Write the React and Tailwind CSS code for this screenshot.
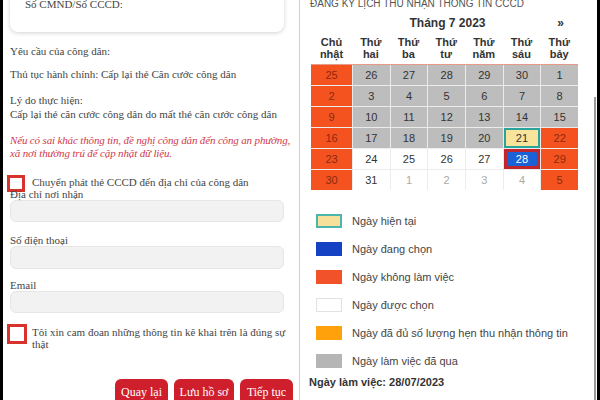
import React from "react";

const rows = [
  [["25","o"],["26","g"],["27","g"],["28","g"],["29","g"],["30","g"],["1","g"]],
  [["2","o"],["3","g"],["4","g"],["5","g"],["6","g"],["7","g"],["8","g"]],
  [["9","o"],["10","g"],["11","g"],["12","g"],["13","g"],["14","g"],["15","g"]],
  [["16","o"],["17","g"],["18","g"],["19","g"],["20","g"],["21","t"],["22","o"]],
  [["23","o"],["24","w"],["25","w"],["26","w"],["27","w"],["28","s"],["29","o"]],
  [["30","o"],["31","w"],["1","m"],["2","m"],["3","m"],["4","m"],["5","o"]],
];

const heads = [["Chủ","nhật"],["Thứ","hai"],["Thứ","ba"],["Thứ","tư"],["Thứ","năm"],["Thứ","sáu"],["Thứ","bảy"]];

function Cell({ v, k }) {
  if (k === "o") return <div className="h-[20px] bg-[#f4531f] text-[#8a2a10] flex items-center justify-center">{v}</div>;
  if (k === "g") return <div className="h-[20px] bg-[#bdbdbd] text-[#333] flex items-center justify-center">{v}</div>;
  if (k === "w") return <div className="h-[20px] bg-white text-[#333] flex items-center justify-center">{v}</div>;
  if (k === "m") return <div className="h-[20px] bg-white text-[#aaa] flex items-center justify-center">{v}</div>;
  if (k === "t") return <div className="h-[20px] bg-[#f7e39c] border-2 border-[#2aa39a] text-[#333] flex items-center justify-center">{v}</div>;
  return (
    <div className="h-[20px] bg-[#c0262b] p-[3px] flex">
      <div className="flex-1 bg-[#1b62d6] rounded-[2px] text-white flex items-center justify-center">{v}</div>
    </div>
  );
}

const legend = [
  ["bg-[#f6e09a] border-2 border-[#4db6ac]", "Ngày hiện tại"],
  ["bg-[#1442c2]", "Ngày đang chọn"],
  ["bg-[#f2522a]", "Ngày không làm việc"],
  ["bg-white border border-[#e2e2e2]", "Ngày được chọn"],
  ["bg-[#ffa10a]", "Ngày đã đủ số lượng hẹn thu nhận thông tin"],
  ["bg-[#b5b5b5]", "Ngày làm việc đã qua"],
];

function Box({ big }) {
  return <div className={(big ? "w-[20px] h-[20px] " : "w-[18px] h-[17px] ") + "border-[3px] border-[#d8322c] bg-white shrink-0"} />;
}

export default function App() {
  return (
    <div className="w-[600px] h-[400px] bg-black flex overflow-hidden">
      <div className="ml-[3px] w-[296px] h-full bg-white pl-[7px] pr-[15px] text-[11px] leading-[14px] text-[#444]" style={{ fontFamily: '"Liberation Serif", serif' }}>
        <div className="-mt-[10px] h-[42px] rounded-lg bg-white shadow-[0_1px_4px_rgba(0,0,0,0.18)] pl-[15px] pt-[7px]">Số CMND/Số CCCD:</div>
        <div className="mt-[12px]">Yêu cầu của công dân:</div>
        <div className="mt-[9px]">Thủ tục hành chính: Cấp lại thẻ Căn cước công dân</div>
        <div className="mt-[12px]">Lý do thực hiện:</div>
        <div>Cấp lại thẻ căn cước công dân do mất thẻ căn cước công dân</div>
        <div className="mt-[13px] italic text-[#d0394a] leading-[13px] whitespace-nowrap tracking-[-0.15px]">
          <div>Nếu có sai khác thông tin, đề nghị công dân đến công an phường,</div>
          <div>xã nơi thường trú để cập nhật dữ liệu.</div>
        </div>
        <div className="mt-[15px] -ml-[3px] flex items-start gap-[7px]">
          <Box />
          <div>Chuyển phát thẻ CCCD đến địa chỉ của công dân</div>
        </div>
        <div className="-mt-[4px] leading-[12px]">Địa chỉ nơi nhận</div>
        <div className="h-[22px] rounded-md bg-[#f2f2f2] border border-[#e6e6e6]" />
        <div className="mt-[12px] leading-[12px]">Số điện thoại</div>
        <div className="h-[23px] rounded-md bg-[#f2f2f2] border border-[#e6e6e6]" />
        <div className="mt-[10px] leading-[12px]">Email</div>
        <div className="h-[22px] rounded-md bg-[#f2f2f2] border border-[#e6e6e6]" />
        <div className="mt-[11px] -ml-[3px] flex items-start gap-[5px]">
          <Box big />
          <div className="mt-[2px] leading-[12px] whitespace-nowrap">
            <div>Tôi xin cam đoan những thông tin kê khai trên là đúng sự</div>
            <div>thật</div>
          </div>
        </div>
        <div className="mt-[29px] flex justify-end gap-[6px] -mr-[9px] text-[12px] text-white">
          <div className="w-[53px] h-[26px] rounded-md bg-[#cf1f2c] flex items-center justify-center">Quay lại</div>
          <div className="w-[60px] h-[26px] rounded-md bg-[#cf1f2c] flex items-center justify-center">Lưu hồ sơ</div>
          <div className="w-[53px] h-[26px] rounded-md bg-[#cf1f2c] flex items-center justify-center">Tiếp tục</div>
        </div>
      </div>
      <div className="w-[1px] h-full bg-[#cfcfcf]" />
      <div className="relative w-[297px] h-full bg-white text-[11px] leading-[14px] text-[#333]" style={{ fontFamily: '"Liberation Sans", Arial, sans-serif' }}>
        <div className="ml-[10px] -mt-[3px] text-[10px] text-[#555] whitespace-nowrap">ĐĂNG KÝ LỊCH THU NHẬN THÔNG TIN CCCD</div>
        <div className="mt-[5px] ml-[11px] w-[267px] relative flex justify-center font-bold text-[12px]">
          <span className="ml-[6px]">Tháng 7 2023</span>
          <span className="absolute right-[14px] top-0">»</span>
        </div>
        <div className="mt-[6px] ml-[11px] w-[267px] grid grid-cols-[41px_repeat(6,1fr)] font-bold leading-[12px] text-[#333] text-center">
          {heads.map((h, i) => (
            <div key={i}><div>{h[0]}</div><div>{h[1]}</div></div>
          ))}
        </div>
        <div className="mt-[4px] ml-[11px] w-[267px] border-t border-[#e89a86] bg-[#ececec] grid grid-cols-[41px_repeat(6,1fr)] gap-px">
          {rows.flat().map(([v, k], i) => <Cell key={i} v={v} k={k} />)}
        </div>
        <div className="mt-[17px] ml-[16px]">
          {legend.map(([c, t], i) => (
            <div key={i} className="h-[28px] flex items-center text-[#444]">
              <div className={"w-[26px] h-[14px] " + c} />
              <span className="ml-[10px]">{t}</span>
            </div>
          ))}
        </div>
        <div className="ml-[9px] font-bold text-[#333]">Ngày làm việc: 28/07/2023</div>
        <div className="absolute right-[1px] top-[97px] bottom-0 w-[2px] bg-[#9a9a9a]" />
      </div>
    </div>
  );
}
